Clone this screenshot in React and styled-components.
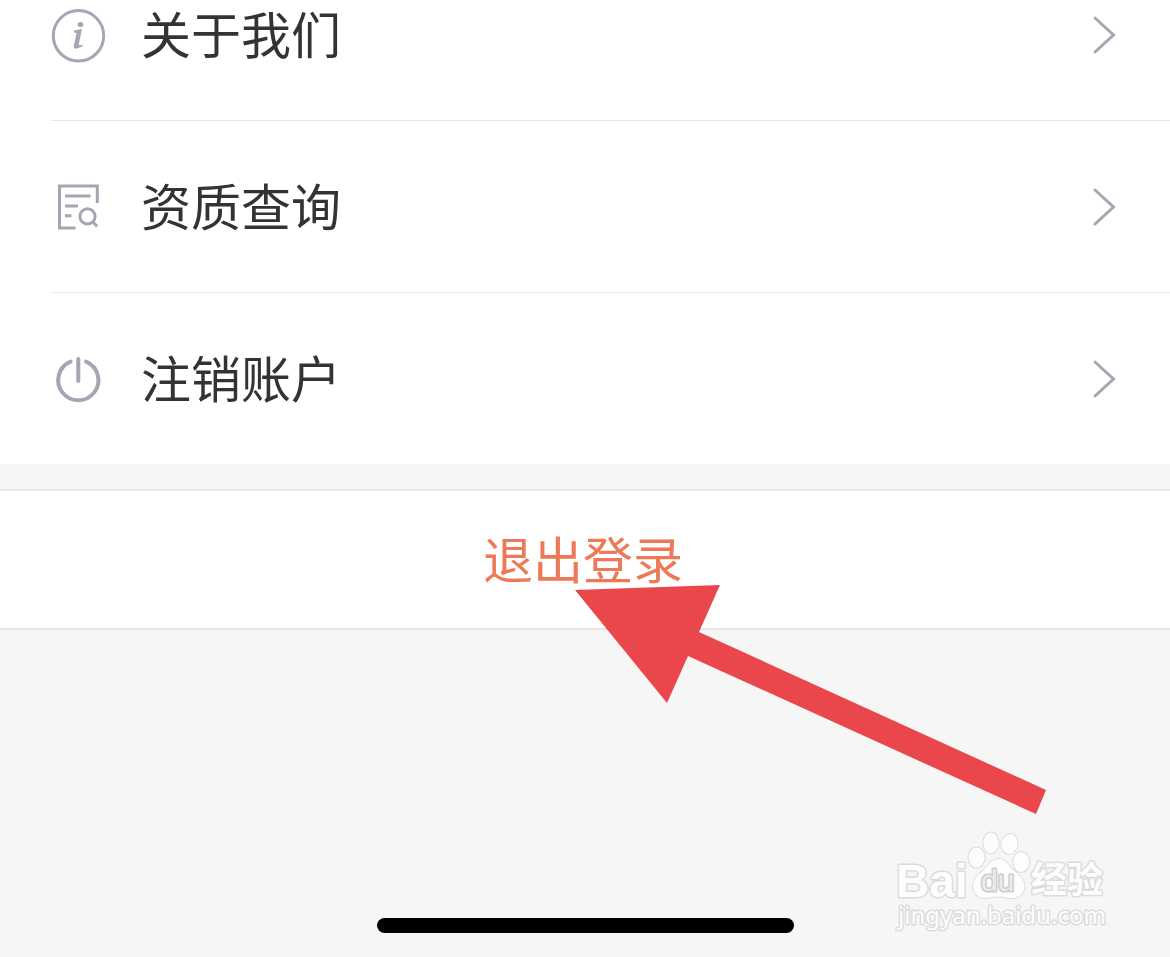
import styled, { createGlobalStyle } from "styled-components";

const GlobalStyle = createGlobalStyle`
  * {
    box-sizing: border-box;
  }
  body {
    margin: 0;
    background: #f6f6f6;
    font-family: "Noto Sans CJK SC", "Noto Sans", sans-serif;
  }
`;

const Page = styled.div`
  position: relative;
  display: flex;
  flex-direction: column;
  min-height: 100vh;
  overflow: hidden;
`;

/* the list is scrolled, its first row is cut off by the top edge */
const Menu = styled.nav`
  margin-top: -51px;
  padding-left: 51px;
  background: #fff;
`;

const Row = styled.a`
  display: flex;
  align-items: center;
  gap: 34px;
  height: ${(props) => (props.$last ? 171 : 172)}px;
  padding-right: 54px;
  border-bottom: ${(props) => (props.$last ? "none" : "1px solid #e6e6e6")};
  color: #333;
  text-decoration: none;
`;

const Label = styled.span`
  flex: 1;
  padding-bottom: 6px;
  font-size: 50px;
  line-height: 60px;
`;

const Icon = styled.svg`
  flex: none;
  width: 56px;
  height: 56px;
  fill: none;
  stroke: #a5a6b3;
  stroke-width: ${(props) => (props.$bold ? 4 : 3)};
`;

const Arrow = styled.svg`
  flex: none;
  width: 24px;
  height: 40px;
  fill: none;
  stroke: #a5a6b3;
  stroke-width: 3;
  stroke-linecap: round;
`;

const Logout = styled.button`
  height: 141px;
  margin-top: 25px;
  padding: 0 4px 6px 0;
  border: solid #e5e5e5;
  border-width: 2px 0;
  background: #fff;
  color: #ee7959;
  font-family: inherit;
  font-size: 50px;
  line-height: 60px;
`;

const Bottom = styled.footer`
  flex: 1;
  display: flex;
  justify-content: center;
  align-items: flex-end;
  padding-bottom: 24px;
`;

const HomeBar = styled.div`
  width: 417px;
  height: 15px;
  border-radius: 8px;
  background: #000;
`;

const Pointer = styled.svg`
  position: absolute;
  top: 584px;
  left: 575px;
  width: 472px;
  height: 231px;
  fill: #e9474b;
  pointer-events: none;
`;

const Watermark = styled.svg`
  position: absolute;
  right: 60px;
  bottom: 20px;
  width: 220px;
  height: 112px;
  fill: #fdfdfd;
  stroke: #dcdcdc;
  stroke-width: 3;
  stroke-linejoin: round;
  paint-order: stroke;
  pointer-events: none;
`;

const InfoIcon = () => (
  <Icon viewBox="0 0 56 56">
    <circle cx="27.5" cy="28.8" r="25.2" />
    <g fill="#a5a6b3" stroke="none">
      <ellipse cx="29.5" cy="17.6" rx="2.9" ry="2.5" />
      <path d="M23.2 23.6 L31 22.1 L27.8 37 Q27.5 39.2 31.8 37.6 L31.4 39.4 L25.6 41.6 Q22.2 42 22.9 38.2 L25.6 25.9 L23 25.4 Z" />
    </g>
  </Icon>
);

const SearchDocIcon = () => (
  <Icon viewBox="0 0 56 56">
    <path d="M24.5 48.9 H8.5 V7.1 H46.3 V24" />
    <path d="M14 17 H39.5 M14 27 H27 M14 36.8 H20.5" />
    <circle cx="36.5" cy="37.4" r="7.6" />
    <path d="M41.6 42.8 L46.2 47.4" />
  </Icon>
);

const PowerIcon = () => (
  <Icon viewBox="0 0 56 56" strokeLinecap="round" $bold>
    <path d="M19.6 10.6 A20.1 20.1 0 1 0 35 10.6" />
    <path d="M27.3 8 V30" />
  </Icon>
);

const rows = [
  { label: "关于我们", icon: <InfoIcon /> },
  { label: "资质查询", icon: <SearchDocIcon /> },
  { label: "注销账户", icon: <PowerIcon /> },
];

const App = () => {
  return (
    <>
      <GlobalStyle />
      <Page>
        <Menu>
          {rows.map((row, i) => (
            <Row key={row.label} href="#" $last={i === rows.length - 1}>
              {row.icon}
              <Label>{row.label}</Label>
              <Arrow viewBox="0 0 24 40">
                <path d="M3 3 L21.5 20 L3 37" />
              </Arrow>
            </Row>
          ))}
        </Menu>
        <Logout type="button">退出登录</Logout>
        <Bottom>
          <HomeBar />
        </Bottom>
        <Pointer viewBox="0 0 472 231">
          <path d="M0 6 L145 1 L124 48 L471 206 L461 230 L113 72 L92 119 Z" />
        </Pointer>
        <Watermark viewBox="0 0 220 112">
          <text x="6" y="72" fontSize="46" fontWeight="700" fontFamily="Liberation Sans, sans-serif">
            Bai
          </text>
          <g strokeWidth="2">
            <ellipse cx="86.5" cy="32.5" rx="8" ry="10" />
            <ellipse cx="101" cy="18" rx="7.6" ry="10.4" />
            <ellipse cx="119.5" cy="19" rx="8" ry="10" transform="rotate(12 119.5 19)" />
            <ellipse cx="131.3" cy="37" rx="8" ry="10" />
            <path d="M108.5 34 C114 34 117 37 120 41.5 C124 47 134 52 134.5 60 C135 68 129 73 122 73 C117 73 114 71.5 108.5 71.5 C103 71.5 100 73 95 73 C88 73 82.5 68 83 60 C83.5 52 93 47 97 41.5 C100 37 103 34 108.5 34 Z" />
          </g>
          <text
            x="91"
            y="66"
            fontSize="30"
            fontFamily="Liberation Sans, sans-serif"
            fill="#ebebeb"
            stroke="#cbcbcb"
          >
            du
          </text>
          <text x="141" y="68" fontSize="36" fontWeight="700" fontFamily="Noto Sans CJK SC, sans-serif">
            经验
          </text>
          <text x="8" y="99" fontSize="24" fontFamily="Noto Sans, sans-serif">
            jingyan.baidu.com
          </text>
        </Watermark>
      </Page>
    </>
  );
};

export default App;
